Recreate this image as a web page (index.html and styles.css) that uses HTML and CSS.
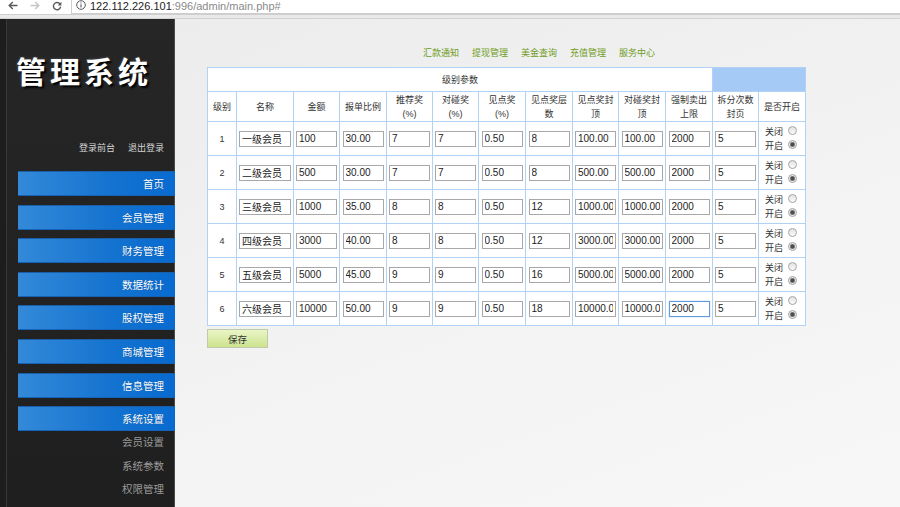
FILE: index.html
```html
<!DOCTYPE html>
<html lang="zh-CN">
<head>
<meta charset="utf-8">
<title>管理系统</title>
<link rel="stylesheet" href="styles.css">
</head>
<body>
<div class="chrome">
  <svg class="ico ico-back" width="10" height="9" viewBox="0 0 10 9"><path d="M9.5 4.5H1.2M4.8 1L1.2 4.5L4.8 8" fill="none" stroke="#5a5a5a" stroke-width="1.4"/></svg>
  <svg class="ico ico-fwd" width="10" height="9" viewBox="0 0 10 9"><path d="M0.5 4.5H8.8M5.2 1L8.8 4.5L5.2 8" fill="none" stroke="#c4c4c4" stroke-width="1.4"/></svg>
  <svg class="ico ico-reload" width="10" height="10" viewBox="0 0 10 10"><path d="M8 3.1A3.6 3.6 0 1 0 8.6 5.6" fill="none" stroke="#5a5a5a" stroke-width="1.4"/><path d="M9.4 0.8V4.4H5.8Z" fill="#5a5a5a"/></svg>
  <div class="omnibox">
    <svg class="ico-info" width="10" height="10" viewBox="0 0 10 10"><circle cx="5" cy="5" r="4.3" fill="none" stroke="#5a5a5a" stroke-width="1"/><path d="M5 4.2V7.6" stroke="#5a5a5a" stroke-width="1.1"/><circle cx="5" cy="2.8" r="0.65" fill="#5a5a5a"/></svg>
    <span class="host">122.112.226.101</span><span class="path">:996/admin/main.php#</span>
  </div>
</div>
<div class="chrome-strip"></div>
<div class="app">
  <aside class="sidebar">
    <h1 class="logo">管理系统</h1>
    <div class="user-links"><a>登录前台</a><a>退出登录</a></div>
    <nav class="menu">
      <a class="menu-item">首页</a>
      <a class="menu-item">会员管理</a>
      <a class="menu-item">财务管理</a>
      <a class="menu-item">数据统计</a>
      <a class="menu-item">股权管理</a>
      <a class="menu-item">商城管理</a>
      <a class="menu-item">信息管理</a>
      <a class="menu-item">系统设置</a>
    </nav>
    <div class="submenu">
      <a>会员设置</a>
      <a>系统参数</a>
      <a>权限管理</a>
    </div>
  </aside>
  <main class="main">
    <div class="top-links">
      <a>汇款通知</a><a>提现管理</a><a>美金查询</a><a>充值管理</a><a>服务中心</a>
    </div>
    <table class="grid">
      <colgroup>
        <col class="c-lv"><col class="c-name"><col class="c46"><col class="c47"><col class="c46"><col class="c46"><col class="c47"><col class="c47"><col class="c46"><col class="c47"><col class="c47"><col class="c46"><col class="c47">
      </colgroup>
      <tr class="head1">
        <td colspan="11">级别参数</td>
        <td colspan="2" class="blue"></td>
      </tr>
      <tr class="head2">
        <td>级别</td><td>名称</td><td>金额</td><td>报单比例</td><td>推荐奖(%)</td><td>对碰奖(%)</td><td>见点奖(%)</td><td>见点奖层数</td><td>见点奖封顶</td><td>对碰奖封顶</td><td>强制卖出上限</td><td>拆分次数封页</td><td>是否开启</td>
      </tr>
      <tr>
        <td>1</td><td><input class="in-name" value="一级会员"></td><td><input value="100"></td><td><input value="30.00"></td><td><input value="7"></td><td><input value="7"></td><td><input value="0.50"></td><td><input value="8"></td><td><input value="100.00"></td><td><input value="100.00"></td><td><input value="2000"></td><td><input value="5"></td>
        <td class="switch"><div>关闭<input type="radio" name="r1"></div><div>开启<input type="radio" name="r1" checked></div></td>
      </tr>
      <tr>
        <td>2</td><td><input class="in-name" value="二级会员"></td><td><input value="500"></td><td><input value="30.00"></td><td><input value="7"></td><td><input value="7"></td><td><input value="0.50"></td><td><input value="8"></td><td><input value="500.00"></td><td><input value="500.00"></td><td><input value="2000"></td><td><input value="5"></td>
        <td class="switch"><div>关闭<input type="radio" name="r2"></div><div>开启<input type="radio" name="r2" checked></div></td>
      </tr>
      <tr>
        <td>3</td><td><input class="in-name" value="三级会员"></td><td><input value="1000"></td><td><input value="35.00"></td><td><input value="8"></td><td><input value="8"></td><td><input value="0.50"></td><td><input value="12"></td><td><input value="1000.00"></td><td><input value="1000.00"></td><td><input value="2000"></td><td><input value="5"></td>
        <td class="switch"><div>关闭<input type="radio" name="r3"></div><div>开启<input type="radio" name="r3" checked></div></td>
      </tr>
      <tr>
        <td>4</td><td><input class="in-name" value="四级会员"></td><td><input value="3000"></td><td><input value="40.00"></td><td><input value="8"></td><td><input value="8"></td><td><input value="0.50"></td><td><input value="12"></td><td><input value="3000.00"></td><td><input value="3000.00"></td><td><input value="2000"></td><td><input value="5"></td>
        <td class="switch"><div>关闭<input type="radio" name="r4"></div><div>开启<input type="radio" name="r4" checked></div></td>
      </tr>
      <tr>
        <td>5</td><td><input class="in-name" value="五级会员"></td><td><input value="5000"></td><td><input value="45.00"></td><td><input value="9"></td><td><input value="9"></td><td><input value="0.50"></td><td><input value="16"></td><td><input value="5000.00"></td><td><input value="5000.00"></td><td><input value="2000"></td><td><input value="5"></td>
        <td class="switch"><div>关闭<input type="radio" name="r5"></div><div>开启<input type="radio" name="r5" checked></div></td>
      </tr>
      <tr>
        <td>6</td><td><input class="in-name" value="六级会员"></td><td><input value="10000"></td><td><input value="50.00"></td><td><input value="9"></td><td><input value="9"></td><td><input value="0.50"></td><td><input value="18"></td><td><input value="10000.00"></td><td><input value="10000.00"></td><td><input class="focused" value="2000"></td><td><input value="5"></td>
        <td class="switch"><div>关闭<input type="radio" name="r6"></div><div>开启<input type="radio" name="r6" checked></div></td>
      </tr>
    </table>
    <button class="save">保存</button>
  </main>
</div>
</body>
</html>
```

FILE: styles.css
```css
* { box-sizing: border-box; }
html, body { margin: 0; padding: 0; }
body {
  width: 900px;
  height: 507px;
  overflow: hidden;
  font-family: "Liberation Sans", "Noto Sans CJK SC", sans-serif;
  background: #f0f0f0;
  color: #333;
}
a { text-decoration: none; cursor: pointer; }

/* browser chrome */
.chrome {
  height: 15px;
  display: flex;
  align-items: flex-start;
  background: #fff;
  border-bottom: 1px solid #cfcfcf;
}
.ico { display: block; flex: none; }
.ico-back { margin: 1px 0 0 8px; }
.ico-fwd { margin: 1px 0 0 12px; }
.ico-reload { margin: 1px 0 0 12px; }
.omnibox {
  margin-left: 9px;
  flex: 1;
  height: 14px;
  border-left: 1px solid #cdcdcd;
  border-bottom: 1px solid #cdcdcd;
  display: flex;
  align-items: flex-start;
  padding-left: 4px;
  font-size: 11px;
  line-height: 12px;
}
.ico-info { display: block; margin-top: 0; flex: none; }
.host { margin-left: 4px; color: #222; }
.path { color: #8a8a8a; }
.chrome-strip {
  height: 4px;
  background: #e9e9e9;
  border-bottom: 1px solid #d2d2d2;
}

.app {
  display: flex;
  height: 488px;
}

/* sidebar */
.sidebar {
  width: 175px;
  flex: none;
  background:
    linear-gradient(to right, #1d1d1d 0, #1d1d1d 6px, #383838 6px, #383838 7px, transparent 7px, transparent 174px, #4a4a4a 174px),
    linear-gradient(to bottom, #262626, #1f1f1f);
  display: flex;
  flex-direction: column;
}
.logo {
  margin: 36px 0 0;
  padding-left: 16px;
  font-family: "Noto Sans CJK SC", sans-serif;
  font-size: 30px;
  line-height: 30px;
  font-weight: bold;
  letter-spacing: 4px;
  color: #fff;
  text-shadow: 2px 2px 2px #000, 0 0 3px #555;
}
.user-links {
  margin-top: 57px;
  padding-right: 11px;
  text-align: right;
  font-size: 9px;
  line-height: 12px;
}
.user-links a { color: #d6d6d6; }
.user-links a + a { margin-left: 13px; }

.menu {
  margin-top: 17px;
  margin-left: 18px;
  display: flex;
  flex-direction: column;
  gap: 8.6px;
}
.menu-item {
  display: block;
  height: 25px;
  line-height: 24px;
  padding-right: 11px;
  text-align: right;
  font-size: 10.5px;
  color: #fff;
  background: linear-gradient(to right, #3489d8, #1473d0 60%, #086ad0);
  border-top: 1px solid #1b5ea8;
  border-bottom: 1px solid #1662b8;
  text-shadow: 0 0 1px rgba(0, 0, 0, 0.3);
}
.submenu {
  display: flex;
  flex-direction: column;
}
.submenu a {
  display: block;
  height: 23.5px;
  line-height: 23.5px;
  padding-right: 11px;
  text-align: right;
  font-size: 10.5px;
  color: #9a9a9a;
}

/* main */
.main {
  flex: 1;
  padding: 27px 0 0 32px;
  background: linear-gradient(160deg, #ececec 0%, #f3f3f3 55%, #f7f7f7 100%);
}
.top-links {
  padding-left: 216px;
  display: flex;
  gap: 13px;
  font-size: 9px;
  line-height: 14px;
}
.top-links a { color: #6f9c22; }

.grid {
  margin-top: 7px;
  width: 598px;
  table-layout: fixed;
  border-collapse: collapse;
  background: #fff;
  font-size: 9px;
  color: #333;
}
.c-lv { width: 29px; }
.c-name { width: 57px; }
.c46 { width: 46px; }
.c47 { width: 47px; }
.grid td {
  border: 1px solid #b2d2f4;
  text-align: center;
  vertical-align: middle;
  padding: 0;
}
.head1 td { height: 24px; }
.head1 .blue { background: #a6caf6; }
.head2 td {
  height: 30px;
  line-height: 14px;
  padding: 0 3px;
}
.grid tr:not(.head1):not(.head2) td { height: 34px; }

.grid input:not([type]) {
  width: 41px;
  height: 16px;
  margin: 0;
  padding: 0 2px;
  border: 1px solid #a8a8a8;
  background: #fff;
  font-family: "Liberation Sans", "Noto Sans CJK SC", sans-serif;
  font-size: 10px;
  color: #222;
  outline: none;
  vertical-align: middle;
}
.grid input.in-name { width: 52px; }
.grid input.focused {
  border-color: #5e9be0;
  box-shadow: 0 0 1px #7fb0ea;
}

.grid td.switch {
  text-align: left;
  padding-left: 6px;
  line-height: 14px;
}
.switch div { display: flex; align-items: center; height: 14px; }
.switch input[type="radio"] {
  appearance: none;
  -webkit-appearance: none;
  width: 9px;
  height: 9px;
  margin: -2px 0 0 5px;
  border: 1px solid #a6a6a6;
  border-radius: 50%;
  background: linear-gradient(to bottom, #e2e2e2, #fbfbfb);
}
.switch input[type="radio"]:checked {
  background: radial-gradient(circle, #4e4e4e 0, #4e4e4e 1.6px, #9a9a9a 2.4px, #e6e6e6 3px, #f6f6f6 4px);
}

.save {
  display: block;
  margin-top: 3px;
  width: 61px;
  height: 19px;
  padding: 0;
  border: 1px solid #c0c9a8;
  background: linear-gradient(to bottom, #eaf5c6, #cde38f);
  font-family: "Liberation Sans", "Noto Sans CJK SC", sans-serif;
  font-size: 9.5px;
  color: #333;
}
```
